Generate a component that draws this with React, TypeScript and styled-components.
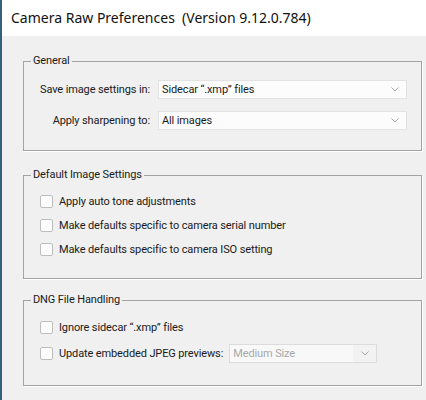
import styled, { createGlobalStyle } from "styled-components";

const GlobalStyle = createGlobalStyle`
  html, body {
    margin: 0;
    padding: 0;
    background: #f0f0f0;
  }
  * {
    box-sizing: border-box;
  }
`;

const WindowWrap = styled.div`
  width: 426px;
  height: 400px;
  display: flex;
  flex-direction: column;
  border-left: 2px solid #35607c;
  background: #f0f0f0;
  font-family: Roboto, "Noto Sans", sans-serif;
  font-size: 11px;
  letter-spacing: -0.12px;
  color: #1a1a1a;
  overflow: hidden;
`;

const TitleBar = styled.div`
  height: 36px;
  flex: none;
  display: flex;
  align-items: center;
  padding: 0 0 2px 9px;
  background: #ffffff;
  font-family: "Noto Sans", sans-serif;
  font-size: 14px;
  letter-spacing: 0;
  color: #111;
  white-space: pre;
`;

const Body = styled.div`
  flex: 1;
  display: flex;
  flex-direction: column;
  padding: 17px 4px 0 21px;
`;

const Group = styled.fieldset<{ $gap?: number }>`
  margin: ${(p) => p.$gap ?? 0}px 0 0 0;
  padding: 0;
  min-width: 0;
  border: 1px solid #a3a3a3;
  box-shadow: 1px 1px 0 #ffffff;

  legend {
    margin-left: 7px;
    padding: 0 2px;
    line-height: 16px;
    color: #1a1a1a;
  }
`;

const FormGrid = styled.div`
  display: grid;
  grid-template-columns: 126px 1fr;
  column-gap: 8px;
  row-gap: 12px;
  align-items: center;
  padding: 11px 14px 20px 0;

  label {
    text-align: right;
    white-space: nowrap;
  }
`;

const CheckList = styled.div<{ $top: number; $bottom: number; $gap: number }>`
  display: flex;
  flex-direction: column;
  gap: ${(p) => p.$gap}px;
  padding: ${(p) => p.$top}px 14px ${(p) => p.$bottom}px 16px;
`;

const CheckRow = styled.div`
  height: 24px;
  display: flex;
  align-items: center;
  gap: 6px;
  white-space: nowrap;
`;

const Box = styled.span`
  width: 13px;
  height: 13px;
  flex: none;
  border: 1px solid #bdbdbd;
  border-radius: 2px;
  background: #fcfcfc;
`;

const Select = styled.div<{ $disabled?: boolean; $width?: number }>`
  height: 19px;
  width: ${(p) => (p.$width ? `${p.$width}px` : "auto")};
  display: flex;
  align-items: center;
  border: 1px solid ${(p) => (p.$disabled ? "#dcdcdc" : "#e2e2e2")};
  background: ${(p) => (p.$disabled ? "#f2f2f2" : "#fcfcfc")};
  color: ${(p) => (p.$disabled ? "#a8a8a8" : "#1a1a1a")};

  .value {
    flex: 1;
    align-self: stretch;
    display: flex;
    align-items: center;
    padding-left: 3px;
    background: ${(p) => (p.$disabled ? "#f8f8f8" : "transparent")};
    white-space: nowrap;
  }

  .arrow {
    width: 23px;
    display: flex;
    justify-content: center;
    align-items: center;
  }
`;

function Chevron() {
  return (
    <svg width="8" height="5" viewBox="0 0 8 5">
      <polyline points="0.5,0.5 4,4 7.5,0.5" fill="none" stroke="#a8a8a8" strokeWidth="1" />
    </svg>
  );
}

function Dropdown({ value, disabled, width }: { value: string; disabled?: boolean; width?: number }) {
  return (
    <Select $disabled={disabled} $width={width}>
      <span className="value">{value}</span>
      <span className="arrow">
        <Chevron />
      </span>
    </Select>
  );
}

function App() {
  return (
    <>
      <GlobalStyle />
      <WindowWrap>
        <TitleBar>Camera Raw Preferences  (Version 9.12.0.784)</TitleBar>
        <Body>
          <Group>
            <legend>General</legend>
            <FormGrid>
              <label>Save image settings in:</label>
              <Dropdown value="Sidecar “.xmp” files" />
              <label>Apply sharpening to:</label>
              <Dropdown value="All images" />
            </FormGrid>
          </Group>

          <Group $gap={16}>
            <legend>Default Image Settings</legend>
            <CheckList $top={6} $bottom={17} $gap={0}>
              <CheckRow>
                <Box />
                Apply auto tone adjustments
              </CheckRow>
              <CheckRow>
                <Box />
                Make defaults specific to camera serial number
              </CheckRow>
              <CheckRow>
                <Box />
                Make defaults specific to camera ISO setting
              </CheckRow>
            </CheckList>
          </Group>

          <Group $gap={13}>
            <legend>DNG File Handling</legend>
            <CheckList $top={7} $bottom={20} $gap={2}>
              <CheckRow>
                <Box />
                Ignore sidecar “.xmp” files
              </CheckRow>
              <CheckRow>
                <Box />
                Update embedded JPEG previews:
                <Dropdown value="Medium Size" disabled width={148} />
              </CheckRow>
            </CheckList>
          </Group>
        </Body>
      </WindowWrap>
    </>
  );
}

export default App;
